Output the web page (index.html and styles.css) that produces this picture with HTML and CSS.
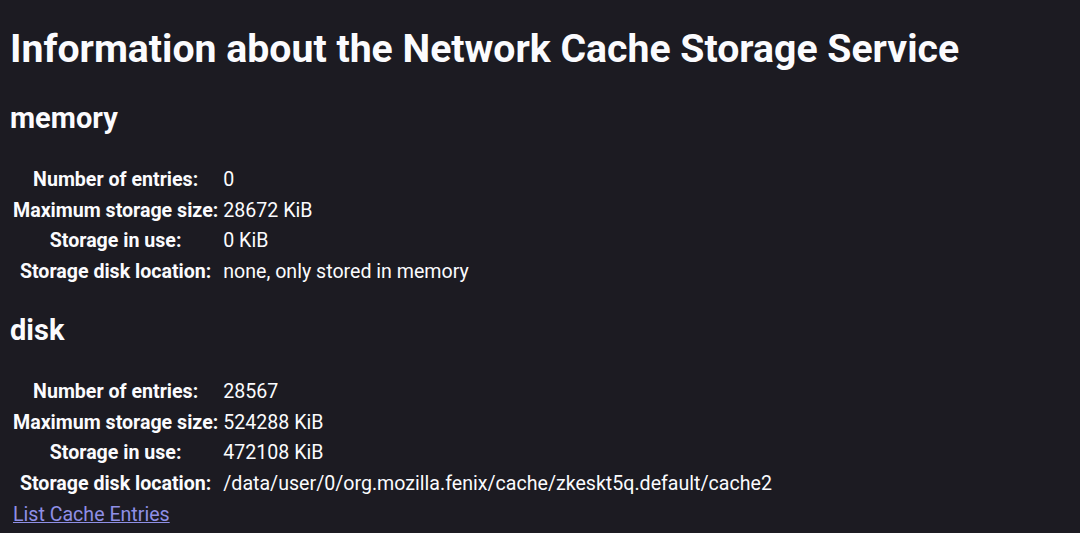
FILE: index.html
```html
<!DOCTYPE html>
<html>
<head>
<meta charset="utf-8">
<link rel="stylesheet" href="styles.css">
</head>
<body>
<h1 class="title">Information about the Network Cache Storage Service</h1>
<h2 class="section">memory</h2>
<table class="info">
<tr><th>Number of entries:</th><td>0</td></tr>
<tr><th>Maximum storage size:</th><td>28672 KiB</td></tr>
<tr><th>Storage in use:</th><td>0 KiB</td></tr>
<tr><th>Storage disk location:</th><td>none, only stored in memory</td></tr>
</table>
<h2 class="section">disk</h2>
<table class="info">
<tr><th>Number of entries:</th><td>28567</td></tr>
<tr><th>Maximum storage size:</th><td>524288 KiB</td></tr>
<tr><th>Storage in use:</th><td>472108 KiB</td></tr>
<tr><th>Storage disk location:</th><td>/data/user/0/org.mozilla.fenix/cache/zkeskt5q.default/cache2</td></tr>
<tr><th colspan="2" class="linkcell"><a href="#" class="entries">List Cache Entries</a></th></tr>
</table>
</body>
</html>
```
FILE: styles.css
```css
html {
  background: #1c1b22;
}
body {
  margin: 8px;
  padding-left: 2px;
  font-family: Roboto, "Liberation Sans", sans-serif;
  font-size: 19.6px;
  color: #fbfbfe;
  background: #1c1b22;
}
.title {
  font-size: 39.2px;
  font-weight: 700;
  margin: 18px 0 28px;
  line-height: 1.2;
}
.section {
  font-size: 29px;
  font-weight: 700;
  margin: 24.5px 0 28px;
  line-height: 1.2;
}
.info {
  border-spacing: 2px;
  margin-left: 0;
}
.info th {
  font-weight: 700;
  text-align: center;
  padding: 1px;
  line-height: 26.7px;
}
.info td {
  text-align: left;
  padding: 1px 1px 1px 2px;
  line-height: 26.7px;
}
.info th.linkcell {
  text-align: left;
  font-weight: 400;
}
.entries {
  color: #8f8fe6;
  text-decoration: underline;
}
```
